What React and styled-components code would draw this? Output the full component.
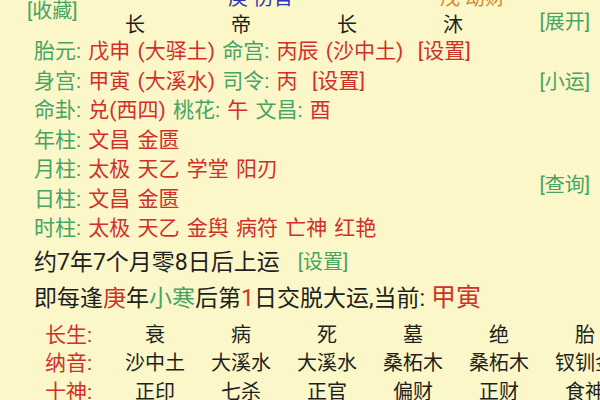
import React from 'react';
import styled, { createGlobalStyle } from 'styled-components';

const C = {
  bg: '#fbf7c8',
  green: '#46a466',
  red: '#d22f2b',
  ink: '#1f1f1f',
  blue: '#2b35b8',
  orange: '#d48a33',
};

const Global = createGlobalStyle`
  html, body { margin: 0; padding: 0; background: ${C.bg}; }
  body { font-family: Roboto, "Noto Sans CJK SC", sans-serif; }
`;

const Page = styled.div`
  width: 600px;
  height: 400px;
  overflow: hidden;
  background: ${C.bg};
  color: ${C.ink};
`;

const Header = styled.div`
  display: grid;
  grid-template-columns: 82px repeat(4, 106px) 1fr;
  grid-template-rows: 27px 27px;
  margin-top: -15px;
`;

const Link = styled.span`
  color: ${(p) => p.$color || C.green};
  font-size: 20px;
  line-height: 20px;
  white-space: nowrap;
`;

const SaveLink = styled(Link)`
  grid-column: 1;
  grid-row: 1 / 3;
  align-self: start;
  margin-top: 16px;
  padding-left: 27px;
`;

const ExpandLink = styled(Link)`
  grid-column: 6;
  grid-row: 2;
  align-self: start;
  justify-self: end;
  padding-right: 10px;
`;

const TopCell = styled.span`
  grid-row: 1;
  grid-column: ${(p) => p.$col};
  color: ${(p) => p.$color};
  font-size: 20px;
  line-height: 27px;
  padding-left: 40px;
  white-space: nowrap;
`;

const StageCell = styled.span`
  grid-row: 2;
  grid-column: ${(p) => p.$col};
  text-align: center;
  font-size: 20px;
  line-height: 27px;
`;

const Body = styled.div`
  display: flex;
  margin-top: -2px;
`;

const Lines = styled.div`
  flex: 1;
  padding-left: 34px;
  display: flex;
  flex-direction: column;
`;

const Line = styled.div`
  font-size: 21px;
  line-height: 29.5px;
  white-space: nowrap;
  word-spacing: 2px;
`;

const Label = styled.span`
  color: ${C.green};
`;

const Value = styled.span`
  color: ${C.red};
`;

const SideLinks = styled.div`
  width: 72px;
  display: flex;
  flex-direction: column;
  align-items: flex-end;
  padding-right: 10px;
`;

const SideLink = styled(Link)`
  margin-top: ${(p) => p.$top}px;
`;

const Notice = styled.div`
  padding-left: 34px;
  margin-top: 1px;
`;

const NoticeLine = styled.div`
  font-size: 23px;
  line-height: 35px;
  white-space: nowrap;
`;

const Mark = styled.span`
  color: ${(p) => p.$color};
`;

const BigMark = styled.span`
  color: ${C.red};
  font-size: 25px;
  margin-left: 6px;
`;

const NoticeLink = styled(Link)`
  margin-left: 18px;
  vertical-align: 1px;
`;

const Table = styled.div`
  display: grid;
  grid-template-columns: 67px repeat(6, 86px);
  grid-auto-rows: 28.5px;
  padding-left: 45px;
  margin-top: 5px;
`;

const RowLabel = styled.span`
  color: ${C.red};
  font-size: 21px;
  line-height: 28.5px;
  white-space: nowrap;
`;

const Cell = styled.span`
  text-align: center;
  font-size: 20px;
  line-height: 28.5px;
  white-space: nowrap;
`;

const stages = ['长', '帝', '长', '沐'];

const tableRows = [
  { label: '长生:', cells: ['衰', '病', '死', '墓', '绝', '胎'] },
  { label: '纳音:', cells: ['沙中土', '大溪水', '大溪水', '桑柘木', '桑柘木', '钗钏金'] },
  { label: '十神:', cells: ['正印', '七杀', '正官', '偏财', '正财', '食神'] },
];

export default function App() {
  return (
    <Page>
      <Global />
      <Header>
        <SaveLink>[收藏]</SaveLink>
        <TopCell $col={3} $color={C.blue}>庚 伤官</TopCell>
        <TopCell $col={5} $color={C.orange}>戊 劫财</TopCell>
        {stages.map((s, i) => (
          <StageCell key={i} $col={i + 2}>{s}</StageCell>
        ))}
        <ExpandLink>[展开]</ExpandLink>
      </Header>
      <Body>
        <Lines>
          <Line>
            <Label>胎元: </Label><Value>戊申 (大驿土) </Value>
            <Label>命宫: </Label><Value>丙辰 (沙中土) &nbsp;[设置]</Value>
          </Line>
          <Line>
            <Label>身宫: </Label><Value>甲寅 (大溪水) </Value>
            <Label>司令: </Label><Value>丙 &nbsp;[设置]</Value>
          </Line>
          <Line>
            <Label>命卦: </Label><Value>兑(西四) </Value>
            <Label>桃花: </Label><Value>午 </Value>
            <Label>文昌: </Label><Value>酉</Value>
          </Line>
          <Line>
            <Label>年柱: </Label><Value>文昌 金匮</Value>
          </Line>
          <Line>
            <Label>月柱: </Label><Value>太极 天乙 学堂 阳刃</Value>
          </Line>
          <Line>
            <Label>日柱: </Label><Value>文昌 金匮</Value>
          </Line>
          <Line>
            <Label>时柱: </Label><Value>太极 天乙 金舆 病符 亡神 红艳</Value>
          </Line>
        </Lines>
        <SideLinks>
          <SideLink $top={35}>[小运]</SideLink>
          <SideLink $top={83}>[查询]</SideLink>
        </SideLinks>
      </Body>
      <Notice>
        <NoticeLine>
          约7年7个月零8日后上运<NoticeLink>[设置]</NoticeLink>
        </NoticeLine>
        <NoticeLine>
          即每逢<Mark $color={C.red}>庚</Mark>年<Mark $color={C.green}>小寒</Mark>后第<Mark $color={C.red}>1</Mark>日交脱大运,当前:<BigMark>甲寅</BigMark>
        </NoticeLine>
      </Notice>
      <Table>
        {tableRows.map((r) => (
          <React.Fragment key={r.label}>
            <RowLabel>{r.label}</RowLabel>
            {r.cells.map((c, i) => (
              <Cell key={i}>{c}</Cell>
            ))}
          </React.Fragment>
        ))}
      </Table>
    </Page>
  );
}
